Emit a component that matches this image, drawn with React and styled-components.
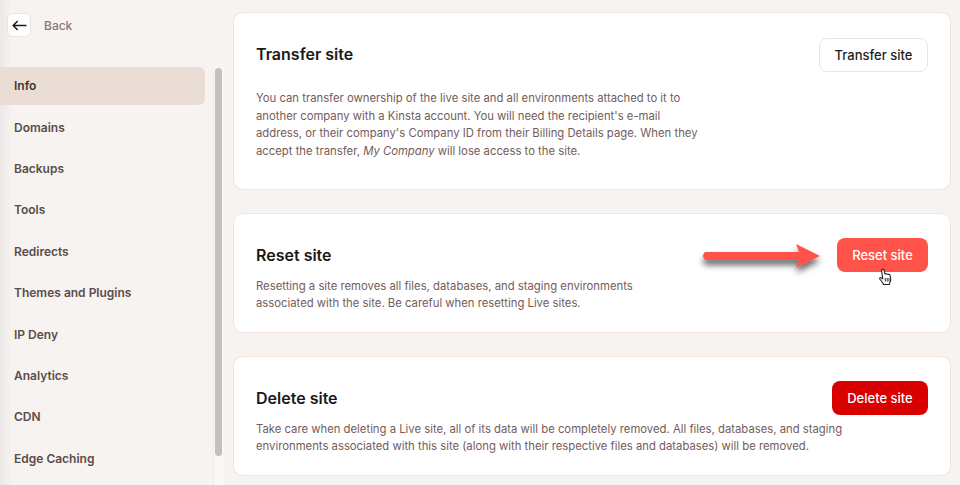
import styled, { createGlobalStyle } from "styled-components";

const GlobalStyle = createGlobalStyle`
  html, body {
    margin: 0;
    height: 485px;
    overflow: hidden;
    background: #f7f3f0;
    font-family: Inter, "Liberation Sans", sans-serif;
  }
`;

const Page = styled.div`
  display: grid;
  grid-template-columns: 224px minmax(0, 1fr);
  height: 485px;
  overflow: hidden;
`;

const Sidebar = styled.aside`
  display: flex;
  flex-direction: column;
  height: 485px;
  overflow: hidden;
  background: linear-gradient(90deg, #ece8e5 0, #f7f3f0 12px);
`;

const BackRow = styled.div`
  display: flex;
  align-items: center;
  gap: 14px;
  height: 26px;
  padding: 12px 0 0 7px;
  margin-bottom: 29px;
`;

const BackButton = styled.div`
  display: flex;
  align-items: center;
  justify-content: center;
  width: 22px;
  height: 22px;
  background: #fff;
  border: 1px solid #efe4dd;
  border-radius: 6px;
  color: #1f1a1a;
`;

const BackLabel = styled.span`
  margin-left: -1px;
  font-size: 12px;
  font-weight: 500;
  color: #8a7675;
`;

const SideBody = styled.div`
  display: grid;
  grid-template-columns: 213px 11px;
  flex: 1;
  min-height: 0;
`;

const Nav = styled.nav`
  display: flex;
  flex-direction: column;
  gap: 3.4px;
`;

const NavItem = styled.div`
  display: flex;
  align-items: center;
  flex: none;
  width: 205px;
  height: 38px;
  box-sizing: border-box;
  padding: 0 0 0.5px 14px;
  border-radius: 0 6px 6px 0;
  font-size: 12px;
  font-weight: 600;
  color: ${(p) => (p.$active ? "#3f3434" : "#5a4c4c")};
  background: ${(p) => (p.$active ? "#eaddd5" : "transparent")};
`;

const Track = styled.div`
  background: #faf8f7;
  border-left: 1px solid #efeceb;
  padding: 0 2px 0 1px;
  height: 418px;
`;

const Thumb = styled.div`
  width: 7px;
  height: 388px;
  margin-top: 1px;
  background: #c2c1c0;
  border-radius: 4px;
`;

const Main = styled.main`
  display: flex;
  flex-direction: column;
  gap: 23px;
  min-width: 0;
  padding: 12px 9px 0 9px;
`;

const Card = styled.section`
  position: relative;
  display: flex;
  justify-content: space-between;
  align-items: flex-start;
  box-sizing: border-box;
  height: ${(p) => p.$height}px;
  padding: ${(p) => p.$top}px 22px 0 22px;
  background: #fff;
  border: 1px solid #f0e6df;
  border-radius: 10px;
`;

const CardText = styled.div`
  display: flex;
  flex-direction: column;
  gap: ${(p) => p.$gap}px;
  width: ${(p) => p.$width}px;
  margin-right: ${(p) => p.$overhang || 0}px;
  flex: none;
  padding-top: ${(p) => p.$pad}px;
`;

const Title = styled.h2`
  margin: 0;
  font-size: 16px;
  line-height: 20px;
  font-weight: 600;
  color: #1c1818;
`;

const Description = styled.p`
  margin: 0;
  font-size: 11.3px;
  line-height: ${(p) => (p.$tight ? 17 : 17.5)}px;
  color: #735c5b;
`;

const Button = styled.button`
  flex: none;
  height: 34px;
  width: ${(p) => p.$width}px;
  padding: 0;
  border-radius: 8px;
  font-family: inherit;
  font-size: 13px;
  font-weight: 500;
  color: ${(p) => p.$color || "#fff"};
  background: ${(p) => p.$bg};
  border: ${(p) => (p.$outline ? "1px solid #efe4dd" : "none")};
`;

const ArrowMark = styled.svg`
  position: absolute;
  left: 465px;
  top: 24px;
  overflow: visible;
`;

const HandCursor = styled.svg`
  position: absolute;
  left: 644px;
  top: 54px;
`;

const navItems = [
  "Info",
  "Domains",
  "Backups",
  "Tools",
  "Redirects",
  "Themes and Plugins",
  "IP Deny",
  "Analytics",
  "CDN",
  "Edge Caching",
];

export default function App() {
  return (
    <>
      <GlobalStyle />
      <Page>
        <Sidebar>
          <BackRow>
            <BackButton>
              <svg width="15" height="11" viewBox="0 0 15 11" fill="none" stroke="currentColor" strokeWidth="1.5">
                <path d="M1.2 5.5H14.500M5.700 1L1.200 5.500L5.700 10" />
              </svg>
            </BackButton>
            <BackLabel>Back</BackLabel>
          </BackRow>
          <SideBody>
            <Nav>
              {navItems.map((item, i) => (
                <NavItem key={item} $active={i === 0}>
                  {item}
                </NavItem>
              ))}
            </Nav>
            <Track>
              <Thumb />
            </Track>
          </SideBody>
        </Sidebar>
        <Main>
          <Card $height={178} $top={25}>
            <CardText $width={445} $gap={26} $pad={6}>
              <Title>Transfer site</Title>
              <Description>
                You can transfer ownership of the live site and all environments attached to it to
                another company with a Kinsta account. You will need the recipient's e-mail
                address, or their company's Company ID from their Billing Details page. When they
                accept the transfer, <em>My Company</em> will lose access to the site.
              </Description>
            </CardText>
            <Button $width={109} $bg="#fff" $color="#1f1a1a" $outline>
              Transfer site
            </Button>
          </Card>
          <Card $height={120} $top={24}>
            <CardText $width={400} $gap={13} $pad={7}>
              <Title>Reset site</Title>
              <Description $tight>
                Resetting a site removes all files, databases, and staging environments
                associated with the site. Be careful when resetting Live sites.
              </Description>
            </CardText>
            <Button $width={91} $bg="#ff5349">
              Reset site
            </Button>
            <ArrowMark width="122" height="32" viewBox="0 0 122 32">
              <defs>
                <filter id="arrow-shadow" x="-10%" y="-60%" width="120%" height="260%">
                  <feDropShadow dx="0" dy="5" stdDeviation="3" floodColor="#000" floodOpacity="0.6" />
                </filter>
              </defs>
              <path
                d="M6 14 L100 14 L97 6 L121 18 L97 30 L100 22 L6 22 Q2 18 6 14 Z"
                fill="#ff5349"
                filter="url(#arrow-shadow)"
              />
            </ArrowMark>
            <HandCursor width="15" height="18" viewBox="1 0 13 18">
              <path
                d="M4 1.5c.8-.6 1.8-.1 2 .8L7 6c.6-.5 1.3-.4 1.7.2.6-.4 1.3-.3 1.7.3.7-.3 1.4 0 1.6.7l.7 3.6c.2 1.6-.2 3-1 4.2l-.5 1.5H5.500l-.7-1.500L1.800 11c-.5-.8.3-1.800 1.300-1.300l1.700 1.200L3.600 2.800c-.1-.5.1-1 .4-1.300z"
                fill="#fff"
                stroke="#222"
                strokeWidth="1.1"
                strokeLinejoin="round"
              />
              <path d="M7.3 10v3.5M9.2 10v3.5M11 10v3.5" stroke="#222" strokeWidth="0.9" />
            </HandCursor>
          </Card>
          <Card $height={120} $top={24}>
            {/* the text runs under the button, so it overhangs into the button's column */}
            <CardText $width={590} $overhang={-20} $gap={13} $pad={7}>
              <Title>Delete site</Title>
              <Description $tight>
                Take care when deleting a Live site, all of its data will be completely removed. All files, databases, and staging
                environments associated with this site (along with their respective files and databases) will be removed.
              </Description>
            </CardText>
            <Button $width={96} $bg="#d90000">
              Delete site
            </Button>
          </Card>
        </Main>
      </Page>
    </>
  );
}
